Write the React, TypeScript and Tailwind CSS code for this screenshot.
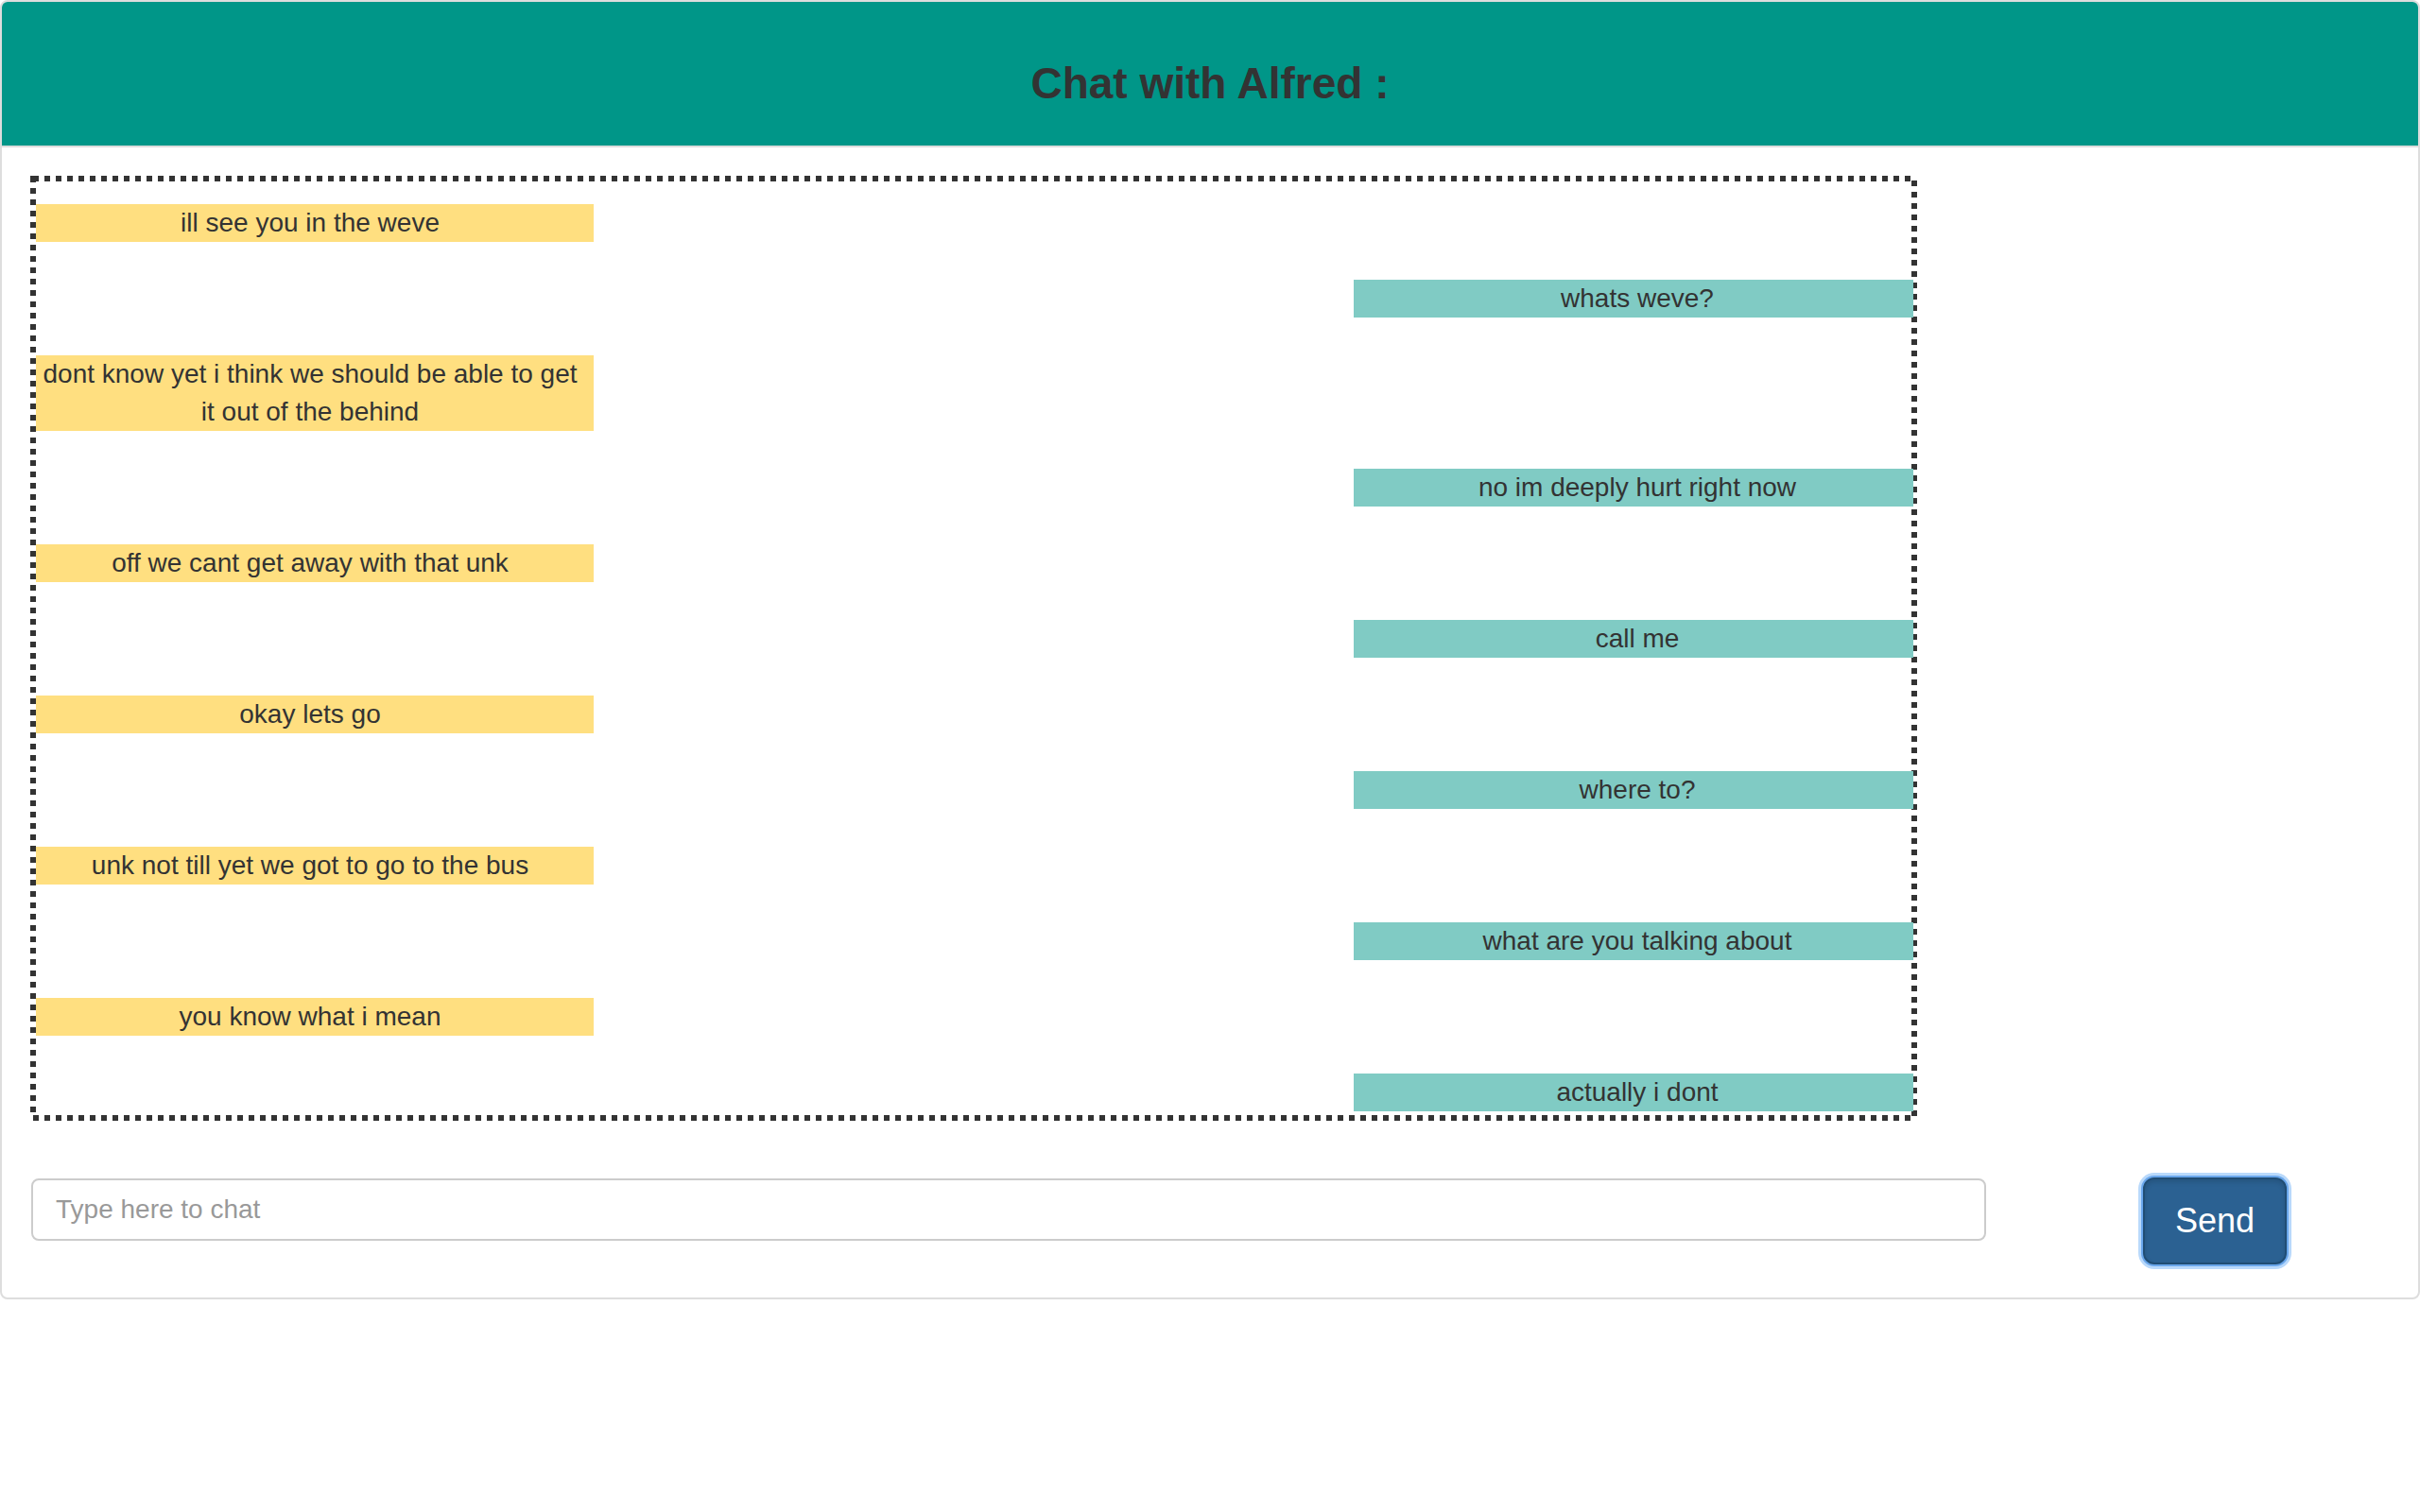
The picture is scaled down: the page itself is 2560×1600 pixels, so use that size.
import React from "react";

const msgs: { t: string; me: boolean }[] = [
  { t: "ill see you in the weve", me: false },
  { t: "whats weve?", me: true },
  { t: "dont know yet i think we should be able to get it out of the behind", me: false },
  { t: "no im deeply hurt right now", me: true },
  { t: "off we cant get away with that unk", me: false },
  { t: "call me", me: true },
  { t: "okay lets go", me: false },
  { t: "where to?", me: true },
  { t: "unk not till yet we got to go to the bus", me: false },
  { t: "what are you talking about", me: true },
  { t: "you know what i mean", me: false },
  { t: "actually i dont", me: true },
];

export default function App() {
  return (
    <div className="w-[2560px] min-h-[1600px] bg-white font-['Liberation_Sans',Arial,sans-serif] text-[#333]">
      <div className="border-2 border-[#ddd] rounded-[8px] overflow-hidden">
        <div className="bg-[#009688] border-b-2 border-[#ddd] h-[154px] pt-[60px]">
          <h3 className="text-center text-[46px] leading-[52px] font-bold text-[#333]">Chat with Alfred :</h3>
        </div>
        <div className="pt-[30px] pl-[30px] pb-[35px]">
          <div className="relative w-[1996px] h-[1000px] p-[6px]">
            <svg className="absolute inset-0" width="1996" height="1000" viewBox="0 0 1996 1000">
              <rect x="3" y="3" width="1990" height="994" fill="none" stroke="#333" strokeWidth="6" strokeDasharray="6 6" />
            </svg>
            <div className="relative h-full overflow-hidden mr-[-2px]">
              <div className="flex flex-col gap-[40px] pt-[24px]">
                {msgs.map((m, i) =>
                  m.me ? (
                    <div key={i} className="flex justify-end">
                      <div className="w-[592px] bg-[#80cbc4] text-center text-[28px] leading-[40px] pl-[8px]">{m.t}</div>
                    </div>
                  ) : (
                    <div key={i} className="flex justify-start">
                      <div className="w-[590px] bg-[#ffdf80] text-center text-[28px] leading-[40px] pr-[10px]">{m.t}</div>
                    </div>
                  )
                )}
              </div>
            </div>
          </div>
          <div className="flex items-start mt-[61px] h-[91px]">
            <input
              type="text"
              placeholder="Type here to chat"
              className="w-[2068px] h-[66px] border-2 border-[#ccc] rounded-[8px] pl-[24px] text-[28px] text-[#555] placeholder:text-[#999] outline-none bg-white ml-[1px]"
            />
            <button className="ml-[166px] -mt-[1px] h-[92px] bg-[#2b6192] border-2 border-[#204d74] rounded-[12px] text-white text-[36px] leading-[48px] px-[32px] shadow-[inset_0_3px_5px_rgba(0,0,0,0.125),0_0_0_2px_#6aa7ec,0_0_0_5px_#b9d9fb]">
              Send
            </button>
          </div>
        </div>
      </div>
    </div>
  );
}
